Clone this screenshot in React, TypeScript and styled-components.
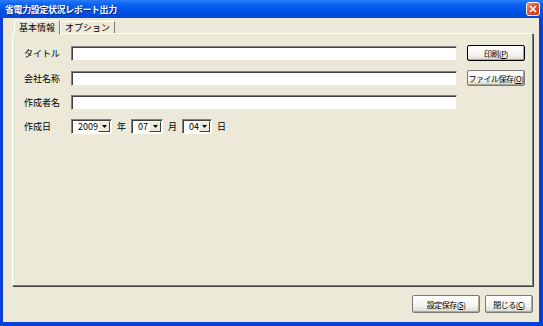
import styled, { createGlobalStyle } from "styled-components";

const Global = createGlobalStyle`
  html, body {
    margin: 0;
    padding: 0;
    background: #ece9d8;
  }
  body {
    font-family: "Noto Sans CJK JP", "Liberation Sans", sans-serif;
    font-size: 9px;
    font-feature-settings: "pwid";
    color: #000;
  }
`;

const Window = styled.div`
  width: 543px;
  height: 326px;
  box-sizing: border-box;
  display: flex;
  flex-direction: column;
  background: #0a3fd6;
  padding: 0 4px 4px 3px;
`;

const TitleBar = styled.div`
  height: 18px;
  margin: 0 -4px 0 -3px;
  padding: 0 3px 0 5px;
  display: flex;
  align-items: center;
  justify-content: space-between;
  background: linear-gradient(to bottom, #2a7cf8 0%, #0a62f2 25%, #0052e6 60%, #0047d8 100%);
`;

const Title = styled.div`
  color: #fff;
  font-weight: bold;
  font-size: 9px;
  letter-spacing: -0.4px;
  text-shadow: 1px 1px 0 #0a1e8a;
`;

const CloseButton = styled.div`
  width: 14px;
  height: 14px;
  box-sizing: border-box;
  border: 1px solid #fff;
  border-radius: 3px;
  background: linear-gradient(135deg, #f08a68 0%, #e0502a 50%, #c63a12 100%);
  display: flex;
  align-items: center;
  justify-content: center;
`;

const Body = styled.div`
  flex: 1;
  background: #ece9d8;
  display: flex;
  flex-direction: column;
  padding: 1px 6px 0 9px;
`;

const Tabs = styled.div`
  display: flex;
  align-items: flex-end;
  height: 14px;
  padding-left: 2px;
`;

const Tab = styled.div<{ $active?: boolean }>`
  height: ${(p) => (p.$active ? "14px" : "12px")};
  box-sizing: border-box;
  padding: 0 4px;
  display: flex;
  align-items: center;
  background: #ece9d8;
  border-top: 1px solid #fff;
  border-left: 1px solid #fff;
  border-right: 1px solid #808080;
  position: relative;
  margin-bottom: ${(p) => (p.$active ? "-1px" : "0")};
  z-index: ${(p) => (p.$active ? 1 : 0)};
`;

const Panel = styled.div`
  flex: 1;
  border-top: 1px solid #fff;
  border-left: 1px solid #fff;
  border-right: 1px solid #808080;
  border-bottom: 1px solid #808080;
  box-shadow: 1px 1px 0 #404040;
  display: grid;
  grid-template-columns: 47px 386px 10px 58px;
  grid-auto-rows: min-content;
  row-gap: 9px;
  align-items: center;
  align-content: start;
  padding: 11px 0 0 11px;
`;

const Label = styled.div`
  white-space: nowrap;
`;

const TextBox = styled.div`
  height: 15px;
  box-sizing: border-box;
  background: #fff;
  border-top: 1px solid #808080;
  border-left: 1px solid #808080;
  border-bottom: 1px solid #ece9d8;
  border-right: 1px solid #ece9d8;
  box-shadow: inset 1px 1px 0 #404040;
`;

const Button = styled.div<{ $default?: boolean }>`
  grid-column: 4;
  height: 16px;
  box-sizing: border-box;
  display: flex;
  align-items: center;
  justify-content: center;
  white-space: nowrap;
  font-size: 8px;
  letter-spacing: -0.5px;
  background: linear-gradient(to bottom, #fff 0%, #f4f3ee 60%, #dcd9cc 100%);
  border: 1px solid ${(p) => (p.$default ? "#000" : "#7a7a7a")};
  border-radius: 2px;
  box-shadow: inset -1px -1px 0 #aca899;
`;

const Key = styled.span`
  text-decoration: underline;
`;

const DateRow = styled.div`
  grid-column: 2 / span 3;
  display: flex;
  align-items: center;
  gap: 5px;
`;

const Combo = styled.div<{ $w: number }>`
  width: ${(p) => p.$w}px;
  height: 15px;
  box-sizing: border-box;
  background: #fff;
  border-top: 1px solid #808080;
  border-left: 1px solid #808080;
  border-bottom: 1px solid #fff;
  border-right: 1px solid #fff;
  box-shadow: inset 1px 1px 0 #404040;
  display: flex;
  align-items: center;
  justify-content: space-between;
  padding: 0 1px 0 6px;
`;

const Arrow = styled.div`
  width: 12px;
  height: 11px;
  box-sizing: border-box;
  background: #ece9d8;
  border-top: 1px solid #fff;
  border-left: 1px solid #fff;
  border-right: 1px solid #404040;
  border-bottom: 1px solid #404040;
  display: flex;
  align-items: center;
  justify-content: center;
`;

const Footer = styled.div`
  height: 36px;
  display: flex;
  justify-content: flex-end;
  align-items: center;
  gap: 5px;
`;

const FooterButton = styled(Button)<{ $w: number }>`
  width: ${(p) => p.$w}px;
  height: 18px;
`;

function Down() {
  return (
    <Arrow>
      <svg width="5" height="3" viewBox="0 0 5 3">
        <path d="M0 0h5L2.5 3z" fill="#000" />
      </svg>
    </Arrow>
  );
}

export default function App() {
  return (
    <>
      <Global />
      <Window>
        <TitleBar>
          <Title>省電力設定状況レポート出力</Title>
          <CloseButton>
            <svg width="8" height="8" viewBox="0 0 8 8">
              <path d="M1 1L7 7M7 1L1 7" stroke="#fff" strokeWidth="1.6" />
            </svg>
          </CloseButton>
        </TitleBar>
        <Body>
          <Tabs>
            <Tab $active>基本情報</Tab>
            <Tab>オプション</Tab>
          </Tabs>
          <Panel>
            <Label>タイトル</Label>
            <TextBox />
            <Button $default>
              印刷(<Key>P</Key>)
            </Button>
            <Label>会社名称</Label>
            <TextBox />
            <Button>
              ファイル保存(<Key>O</Key>)
            </Button>
            <Label>作成者名</Label>
            <TextBox />
            <div />
            <div />
            <Label>作成日</Label>
            <DateRow>
              <Combo $w={41}>
                2009
                <Down />
              </Combo>
              <span>年</span>
              <Combo $w={32}>
                07
                <Down />
              </Combo>
              <span>月</span>
              <Combo $w={30}>
                04
                <Down />
              </Combo>
              <span>日</span>
            </DateRow>
          </Panel>
          <Footer>
            <FooterButton $w={68}>
              設定保存(<Key>S</Key>)
            </FooterButton>
            <FooterButton $w={48}>
              閉じる(<Key>C</Key>)
            </FooterButton>
          </Footer>
        </Body>
      </Window>
    </>
  );
}
